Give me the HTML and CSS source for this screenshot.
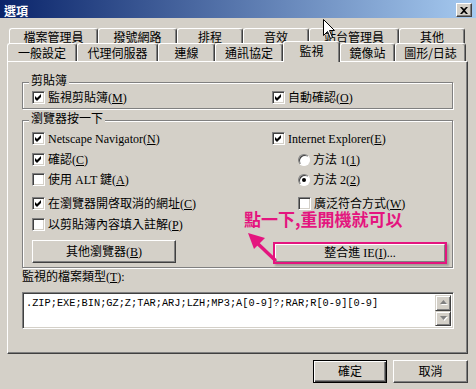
FILE: index.html
```html
<!DOCTYPE html>
<html lang="zh-Hant">
<head>
<meta charset="utf-8">
<title>選項</title>
<link rel="stylesheet" href="styles.css">
</head>
<body>
<div class="window">
  <div class="titlebar">
    <span class="title">選項</span>
    <span class="close"><svg width="8" height="7" viewBox="0 0 8 7"><path d="M0 0h2l2 2 2-2h2L5 3.5 8 7H6L4 5 2 7H0l3-3.5z" fill="#000"/></svg></span>
  </div>

  <div class="tabs">
    <div class="tabrow back">
      <div class="tab">檔案管理員</div>
      <div class="tab">撥號網路</div>
      <div class="tab">排程</div>
      <div class="tab">音效</div>
      <div class="tab">站台管理員</div>
      <div class="tab">其他</div>
    </div>
    <div class="tabrow front">
      <div class="tab">一般設定</div>
      <div class="tab">代理伺服器</div>
      <div class="tab">連線</div>
      <div class="tab">通訊協定</div>
      <div class="tab selected">監視</div>
      <div class="tab">鏡像站</div>
      <div class="tab">圖形/日誌</div>
    </div>
  </div>

  <div class="panel">
    <div class="group g1">
      <span class="legend">剪貼簿</span>
      <div class="cols g1-row">
        <label class="chk"><span class="box"><svg width="11" height="11" viewBox="0 0 11 11"><polygon points="2,4 4,6 8,2 8,5 4,9 2,7" fill="#000"/></svg></span><span class="lbl">監視剪貼簿(<u>M</u>)</span></label>
        <label class="chk"><span class="box"><svg width="11" height="11" viewBox="0 0 11 11"><polygon points="2,4 4,6 8,2 8,5 4,9 2,7" fill="#000"/></svg></span><span class="lbl">自動確認(<u>O</u>)</span></label>
      </div>
    </div>

    <div class="group g2">
      <span class="legend">瀏覽器按一下</span>
      <div class="cols browser">
        <label class="chk"><span class="box"><svg width="11" height="11" viewBox="0 0 11 11"><polygon points="2,4 4,6 8,2 8,5 4,9 2,7" fill="#000"/></svg></span><span class="lbl">Netscape Navigator(<u>N</u>)</span></label>
        <label class="chk"><span class="box"><svg width="11" height="11" viewBox="0 0 11 11"><polygon points="2,4 4,6 8,2 8,5 4,9 2,7" fill="#000"/></svg></span><span class="lbl">Internet Explorer(<u>E</u>)</span></label>

        <label class="chk"><span class="box"><svg width="11" height="11" viewBox="0 0 11 11"><polygon points="2,4 4,6 8,2 8,5 4,9 2,7" fill="#000"/></svg></span><span class="lbl">確認(<u>C</u>)</span></label>
        <label class="chk indent"><span class="radio"></span><span class="lbl">方法 1(<u>1</u>)</span></label>

        <label class="chk"><span class="box"></span><span class="lbl">使用 ALT 鍵(<u>A</u>)</span></label>
        <label class="chk indent"><span class="radio on"></span><span class="lbl">方法 2(<u>2</u>)</span></label>

        <label class="chk"><span class="box"><svg width="11" height="11" viewBox="0 0 11 11"><polygon points="2,4 4,6 8,2 8,5 4,9 2,7" fill="#000"/></svg></span><span class="lbl">在瀏覽器開啓取消的網址(<u>C</u>)</span></label>
        <label class="chk indent"><span class="box"></span><span class="lbl">廣泛符合方式(<u>W</u>)</span></label>

        <label class="chk"><span class="box"></span><span class="lbl">以剪貼簿內容填入註解(<u>P</u>)</span></label>
        <span class="empty"></span>

        <button class="btn other">其他瀏覽器(<u>B</u>)</button>
        <span class="hl"><button class="btn ie">整合進 IE(<u>I</u>)...</button></span>
      </div>
    </div>

    <div class="typelabel">監視的檔案類型(<u>T</u>):</div>
    <div class="textarea">
      <div class="ta-text">.ZIP;EXE;BIN;GZ;Z;TAR;ARJ;LZH;MP3;A[0-9]?;RAR;R[0-9][0-9]</div>
      <div class="scroll">
        <span class="sbtn"><svg width="7" height="5" viewBox="0 0 7 5"><polygon points="3.5,0 7,4 0,4" fill="#808080"/></svg></span>
        <span class="sbtn"><svg width="7" height="5" viewBox="0 0 7 5"><polygon points="0,0 7,0 3.5,4" fill="#808080"/></svg></span>
      </div>
    </div>
  </div>

  <div class="footer">
    <button class="btn default">確定</button>
    <button class="btn">取消</button>
  </div>

  <div class="note">點一下,重開機就可以</div>
  <svg class="arrow" width="40" height="40" viewBox="0 0 40 40">
    <path d="M31 32 L12 14" stroke="#e4157f" stroke-width="3.5" stroke-linecap="round" fill="none"/>
    <polygon points="4,5 21,10 10,21" fill="#e4157f"/>
  </svg>
  <svg class="cursor" width="13" height="21" viewBox="0 0 13 21">
    <polygon points="0.5,0.5 0.5,16.5 4.5,12.5 7.5,19.5 9.5,18.5 6.5,11.5 11.5,11.5" fill="#fff" stroke="#000" stroke-width="1" stroke-linejoin="miter"/>
  </svg>
</div>
</body>
</html>
```

FILE: styles.css
```css
* { box-sizing: border-box; margin: 0; padding: 0; }
html, body { width: 476px; height: 389px; overflow: hidden; }
body {
  background: #d4d0c8;
  font-family: "Liberation Serif", "Noto Sans CJK TC", serif;
  font-size: 12px;
  line-height: 12px;
  color: #000;
}
.window { position: relative; width: 476px; height: 389px; }

/* title bar */
.titlebar {
  height: 18px;
  background: linear-gradient(to right, #0a246a, #a6caf0);
  display: flex;
  justify-content: space-between;
  align-items: flex-start;
  padding: 5px 4px 0 4px;
}
.title {
  color: #fff;
  font-family: "Noto Sans CJK TC", sans-serif;
  font-weight: bold;
  font-size: 12px;
  line-height: 12px;
}
.close {
  width: 16px;
  height: 14px;
  margin-top: -2px;
  background: #d4d0c8;
  border: 1px solid;
  border-color: #fff #404040 #404040 #fff;
  box-shadow: inset -1px -1px #808080;
  display: flex;
  align-items: center;
  justify-content: center;
}

/* tabs */
.tabs { margin-top: 10px; }
.tabrow { display: grid; }
.back {
  grid-template-columns: 89px 79px 66px 66px 90px 66px;
  margin-left: 9px;
  height: 15px;
}
.front {
  grid-template-columns: 70px 81px 57px 68px 57px 55px 71px;
  margin-left: 7px;
  height: 18px;
}
.tab {
  background: #d4d0c8;
  border-top: 1px solid #fff;
  border-left: 1px solid #fff;
  border-right: 1px solid #404040;
  box-shadow: inset -1px 0 #808080;
  border-radius: 3px 3px 0 0;
  text-align: center;
  font-family: "Noto Sans CJK TC", sans-serif;
  padding-top: 3px;
  white-space: nowrap;
}
.back .tab { height: 18px; padding-top: 2px; }
.front .tab { height: 18px; }
.front .tab.selected {
  position: relative;
  z-index: 2;
  margin-top: -2px;
  height: 21px;
}

/* page */
.panel {
  margin-left: 7px;
  width: 461px;
  height: 293px;
  border-top: 1px solid #fff;
  border-left: 1px solid #fff;
  border-right: 1px solid #404040;
  border-bottom: 1px solid #404040;
  box-shadow: inset -1px -1px #808080;
  padding: 20px 0 0 14px;
}

.group {
  position: relative;
  width: 431px;
  border: 1px solid #808080;
  box-shadow: inset 1px 1px #fff, 1px 1px #fff;
}
.legend {
  display: block;
  width: max-content;
  margin: -9px 0 0 6px;
  padding: 0 2px;
  background: #d4d0c8;
  font-family: "Noto Sans CJK TC", sans-serif;
}
.g1 { padding-bottom: 4px; }
.g2 { margin-top: 11px; padding-bottom: 5px; }

.cols {
  display: grid;
  grid-template-columns: 240px 1fr;
  padding-left: 9px;
}
.g1-row { margin-top: 5px; }
.browser {
  margin-top: 8px;
  grid-template-rows: 21px 20px 24px 21px 22px 22px;
}

.chk {
  display: flex;
  align-items: center;
  gap: 3px;
  height: 13px;
  white-space: nowrap;
}
.lbl { display: block; white-space: nowrap; }
.indent { padding-left: 26px; }
.box {
  width: 13px;
  height: 13px;
  flex: none;
  background: #fff;
  border: 1px solid;
  border-color: #808080 #fff #fff #808080;
  box-shadow: inset 1px 1px #404040, inset -1px -1px #d4d0c8;
}
.box svg { display: block; }
.radio {
  width: 12px;
  height: 12px;
  flex: none;
  border-radius: 50%;
  background: #fff;
  border: 1px solid;
  border-color: #808080 #fff #fff #808080;
  box-shadow: inset 1px 1px #404040;
  display: flex;
  align-items: center;
  justify-content: center;
}
.radio.on::after {
  content: "";
  width: 4px;
  height: 4px;
  border-radius: 50%;
  background: #000;
}

/* buttons */
.btn {
  font: inherit;
  color: #000;
  background: #d4d0c8;
  border: 1px solid;
  border-color: #fff #404040 #404040 #fff;
  box-shadow: inset -1px -1px #808080;
  display: flex;
  align-items: center;
  justify-content: center;
  white-space: nowrap;
}
.other { width: 144px; height: 23px; }
.hl {
  display: block;
  width: 174px;
  height: 22px;
  margin: 2px 0 0 1px;
  border: 2px solid #e4157f;
  box-shadow: 2px 2px 2px rgba(0, 0, 0, 0.25);
}
.ie { width: 100%; height: 100%; border-color: #fff #808080 #808080 #fff; box-shadow: none; }

.typelabel { margin-top: 3px; }

.textarea {
  margin-top: 9px;
  width: 432px;
  height: 37px;
  background: #fff;
  border: 1px solid;
  border-color: #808080 #fff #fff #808080;
  box-shadow: inset 1px 1px #404040, inset -1px -1px #d4d0c8;
  display: flex;
  justify-content: space-between;
  padding: 2px;
}
.ta-text {
  font-family: "Liberation Mono", monospace;
  font-size: 10.3px;
  line-height: 12px;
  padding: 2px 0 0 1px;
  white-space: nowrap;
}
.scroll { width: 16px; display: flex; flex-direction: column; }
.sbtn {
  height: 16px;
  background: #d4d0c8;
  border: 1px solid;
  border-color: #d4d0c8 #404040 #404040 #d4d0c8;
  box-shadow: inset 1px 1px #fff, inset -1px -1px #808080;
  display: flex;
  align-items: center;
  justify-content: center;
}
.sbtn svg { filter: drop-shadow(1px 1px 0 #fff); }

.footer {
  display: flex;
  justify-content: flex-end;
  gap: 6px;
  padding-right: 8px;
  margin-top: 6px;
}
.footer .btn { width: 74px; height: 23px; }
.footer .btn:last-child { width: 75px; }
.btn.default {
  border: 1px solid #000;
  box-shadow: inset 1px 1px #fff, inset -1px -1px #404040, inset -2px -2px #808080;
}

/* annotation overlay */
.note {
  position: absolute;
  left: 244px;
  top: 210px;
  color: #e4157f;
  font-family: "Noto Sans CJK TC", sans-serif;
  font-weight: bold;
  font-size: 17px;
  line-height: 17px;
  white-space: nowrap;
}
.arrow { position: absolute; left: 244px; top: 228px; }
.cursor { position: absolute; left: 323px; top: 19px; }
```
